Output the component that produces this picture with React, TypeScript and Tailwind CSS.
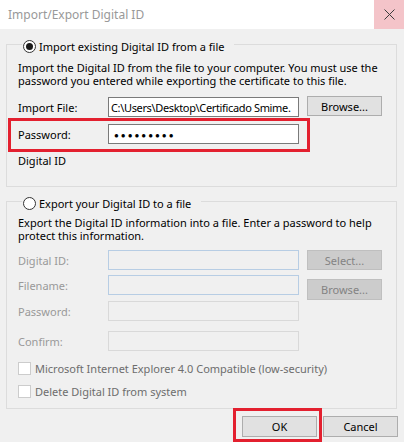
import React from 'react';

const font = "font-['Noto_Sans','Open_Sans',sans-serif]";

function Radio({ checked }: { checked?: boolean }) {
  return (
    <span className="flex h-[13px] w-[13px] items-center justify-center rounded-full border border-[#333333] bg-white">
      {checked && <span className="h-[7px] w-[7px] rounded-full bg-[#1a1a1a]" />}
    </span>
  );
}

function Checkbox({ label }: { label: string }) {
  return (
    <div className="flex h-[13px] items-center">
      <span className="h-[13px] w-[13px] border border-[#cccccc] bg-white" />
      <span className="ml-[4px] text-[#6d6d6d]">{label}</span>
    </div>
  );
}

function Button({ children, disabled, className = '' }: { children: React.ReactNode; disabled?: boolean; className?: string }) {
  return (
    <div
      className={`flex w-[75px] items-center justify-center border ${
        disabled ? 'border-[#bfbfbf] bg-[#cccccc] text-[#838383]' : 'border-[#adadad] bg-[#e1e1e1] text-black'
      } ${className}`}
    >
      {children}
    </div>
  );
}

function DisabledRow({ label, blue, children, className = '' }: { label: string; blue?: boolean; children?: React.ReactNode; className?: string }) {
  return (
    <div className={`flex items-start ${className}`}>
      <span className="flex h-[20px] w-[90px] items-center text-[#999999]">{label}</span>
      <div className={`h-[20px] w-[191px] border bg-[#f0f0f0] ${blue ? 'border-[#b7cde4]' : 'border-[#d9d9d9]'}`} />
      {children}
    </div>
  );
}

export default function App() {
  return (
    <div className={`h-[442px] w-[404px] overflow-hidden bg-[#f0f0f0] text-[11px] leading-[13px] text-black ${font}`}>
      {/* Title bar */}
      <div className="flex h-[29px] items-center justify-between bg-white">
        <span className="pl-[8px] text-[12px] text-[#999999]">Import/Export Digital ID</span>
        <div className="flex h-[29px] w-[30px] items-center justify-center bg-[#f4c4c9]">
          <svg width="11" height="11" viewBox="0 0 11 11">
            <path d="M0.5 0.5 L10.5 10.5 M10.5 0.5 L0.5 10.5" stroke="#3c3c3c" strokeWidth="1" />
          </svg>
        </div>
      </div>

      {/* Import group */}
      <fieldset className="ml-[6px] mt-[4px] w-[391px] border border-[#dcdcdc] pb-[19px] pl-[11px]">
        <legend className="ml-[4px] h-[22px] pl-[1px] pr-[10px]">
          <div className="flex h-[22px] items-center gap-[3px] pt-[4px]">
            <Radio checked />
            <span>Import existing Digital ID from a file</span>
          </div>
        </legend>
        <p className="mt-[6px]">
          Import the Digital ID from the file to your computer. You must use the
          <br />
          password you entered while exporting the certificate to this file.
        </p>
        <div className="mt-[10px] flex items-start">
          <span className="flex h-[20px] w-[90px] items-center">Import File:</span>
          <div className="flex h-[20px] w-[191px] items-center overflow-hidden whitespace-nowrap border border-[#7a7a7a] bg-white pl-[2px] tracking-[-0.35px]">
            C:\Users\Desktop\Certificado Smime.
          </div>
          <Button className="-mt-px ml-[8px] h-[20px]">Browse...</Button>
        </div>
        <div className="ml-[-10px] mt-[1px] flex h-[34px] w-[302px] items-start border-[3px] border-[#e3202f] pl-[7px] pt-[3px]">
          <span className="flex h-[20px] w-[90px] items-center">Password:</span>
          <div className="flex h-[20px] w-[191px] items-center border border-[#7a7a7a] bg-white pl-[5px] text-[8px] tracking-[2px]">
            ●●●●●●●●●
          </div>
        </div>
        <p className="mt-[2px]">Digital ID</p>
      </fieldset>

      {/* Export group */}
      <fieldset className="ml-[6px] mt-[3px] w-[391px] border border-[#dcdcdc] pb-[10px] pl-[11px]">
        <legend className="ml-[4px] h-[22px] pl-[1px] pr-[10px]">
          <div className="flex h-[22px] items-center gap-[3px] pt-[4px]">
            <Radio />
            <span>Export your Digital ID to a file</span>
          </div>
        </legend>
        <p className="mt-[4px]">
          Export the Digital ID information into a file. Enter a password to help
          <br />
          protect this information.
        </p>
        <DisabledRow label="Digital ID:" blue className="mt-[8px]">
          <Button disabled className="ml-[8px] h-[20px]">Select...</Button>
        </DisabledRow>
        <DisabledRow label="Filename:" blue className="mt-[5px]">
          <Button disabled className="ml-[8px] mt-[4px] h-[21px]">Browse...</Button>
        </DisabledRow>
        <DisabledRow label="Password:" className="mt-[1px]" />
        <DisabledRow label="Confirm:" className="mt-[10px]" />
        <div className="mt-[11px] flex flex-col gap-[10px]">
          <Checkbox label="Microsoft Internet Explorer 4.0 Compatible (low-security)" />
          <Checkbox label="Delete Digital ID from system" />
        </div>
      </fieldset>

      {/* Footer buttons */}
      <div className="-mt-px flex items-start justify-end pr-[6px]">
        <div className="h-[34px] w-[89px] border-[3px] border-[#e3202f] pl-[6px] pt-[5px]">
          <Button className="h-[21px] w-[73px]">OK</Button>
        </div>
        <Button className="ml-[1px] mt-[8px] h-[21px] w-[73px]">Cancel</Button>
      </div>
    </div>
  );
}
